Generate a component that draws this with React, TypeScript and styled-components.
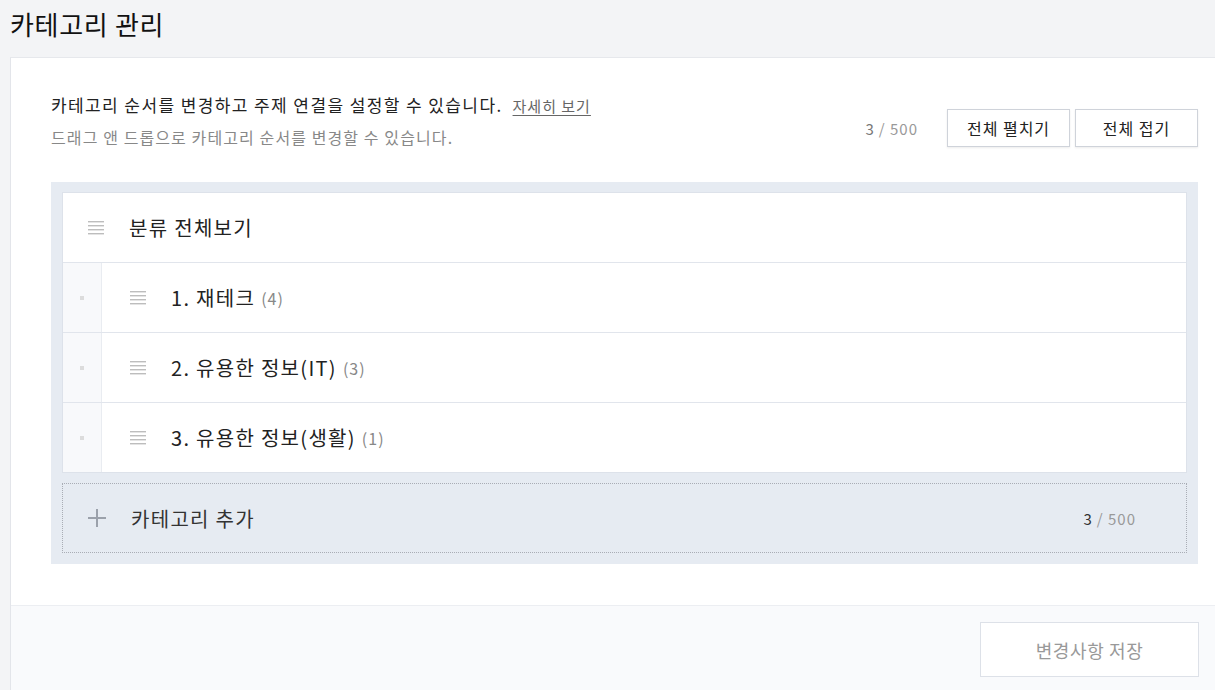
import { createGlobalStyle, styled } from "styled-components";

const GlobalStyle = createGlobalStyle`
  html, body {
    margin: 0;
    padding: 0;
    background: #f3f4f6;
    font-family: "Noto Sans CJK KR", "Noto Sans", sans-serif;
    color: #222;
  }
  * { box-sizing: border-box; }
`;

const Page = styled.div`
  width: 1215px;
  height: 690px;
  overflow: hidden;
  padding-left: 10px;
`;

const Title = styled.h1`
  margin: 0;
  height: 57px;
  display: flex;
  align-items: center;
  padding-bottom: 10px;
  font-size: 26px;
  letter-spacing: 0.7px;
  font-weight: 400;
  color: #111;
`;

const Card = styled.div`
  background: #fff;
  border-top: 1px solid #e6e8ec;
  border-left: 1px solid #e3e5ea;
  width: 1215px;
`;

const Body = styled.div`
  padding: 35px 0 41px 40px;
  width: 1187px;
`;

const Header = styled.div`
  display: flex;
  align-items: flex-start;
  justify-content: space-between;
  height: 89px;
`;

const Desc = styled.div`
  display: flex;
  flex-direction: column;
  gap: 8px;
`;

const DescMain = styled.p`
  margin: 0;
  font-size: 17px;
  letter-spacing: 1.4px;
  line-height: 24px;
  color: #222;
`;

const HelpLink = styled.a`
  margin-left: 10px;
  font-size: 15px;
  letter-spacing: 1px;
  color: #666;
  text-decoration: underline;
  text-underline-offset: 3px;
`;

const DescSub = styled.p`
  margin: 0;
  font-size: 16px;
  letter-spacing: 1.1px;
  line-height: 22px;
  color: #888;
`;

const Actions = styled.div`
  display: flex;
  align-items: center;
  gap: 5px;
  margin-top: 16px;
`;

const Counter = styled.span<{ $strong?: boolean }>`
  font-size: 15px;
  letter-spacing: 1px;
  color: #999;
  margin-right: 24px;
  b {
    font-weight: 400;
    color: ${(p) => (p.$strong ? "#333" : "#777")};
    margin-right: 4px;
  }
`;

const Button = styled.button`
  height: 38px;
  padding: 0;
  width: 123px;
  background: #fff;
  border: 1px solid #cfd3da;
  box-shadow: 0 1px 2px rgba(0, 0, 0, 0.08);
  font-family: inherit;
  font-size: 16px;
  letter-spacing: 1px;
  color: #222;
`;

const ListBox = styled.div`
  background: #e6ebf2;
  padding: 10px 11px 11px;
  display: flex;
  flex-direction: column;
  gap: 10px;
`;

const Rows = styled.div`
  background: #fff;
  border: 1px solid #dde2ea;
`;

const Row = styled.div<{ $child?: boolean }>`
  height: ${(p) => (p.$child ? 70 : 69)}px;
  display: flex;
  align-items: stretch;
  border-top: ${(p) => (p.$child ? "1px solid #e1e5ec" : "none")};
`;

const Gutter = styled.div`
  width: 39px;
  background: #f8f9fb;
  border-right: 1px solid #e9ecf1;
  display: flex;
  align-items: center;
  justify-content: center;
  &::after {
    content: "";
    width: 4px;
    height: 4px;
    background: #dcdcdc;
  }
`;

const RowInner = styled.div<{ $indent: number }>`
  flex: 1;
  display: flex;
  align-items: center;
  padding-left: ${(p) => p.$indent}px;
`;

const Grip = styled.span`
  display: flex;
  flex-direction: column;
  gap: 3px;
  width: 16px;
  margin-right: 25px;
  span {
    height: 1px;
    background: #bdbdbd;
    box-shadow: 0 1px 0 #e4e4e4;
  }
`;

const Name = styled.span`
  font-size: 20px;
  letter-spacing: 1.3px;
  color: #222;
`;

const Count = styled.span`
  margin-left: 6px;
  font-size: 16px;
  letter-spacing: 1px;
  color: #888;
`;

const AddRow = styled.div`
  height: 70px;
  border: 1px dotted #a9adb5;
  display: flex;
  align-items: center;
  padding: 0 50px 0 25px;
`;

const Plus = styled.span`
  position: relative;
  width: 18px;
  height: 18px;
  margin-right: 25px;
  &::before,
  &::after {
    content: "";
    position: absolute;
    background: #9ba1ab;
  }
  &::before {
    left: 0;
    right: 0;
    top: 8px;
    height: 2px;
  }
  &::after {
    top: 0;
    bottom: 0;
    left: 8px;
    width: 2px;
  }
`;

const AddLabel = styled.span`
  flex: 1;
  font-size: 20px;
  letter-spacing: 1.3px;
  color: #333;
`;

const Footer = styled.div`
  border-top: 1px solid #eceef2;
  background: #f9fafc;
  height: 86px;
  width: 1205px;
  display: flex;
  justify-content: flex-end;
  padding: 16px 17px 0 0;
`;

const SaveButton = styled.button`
  width: 219px;
  height: 55px;
  background: #fff;
  border: 1px solid #dde1e8;
  font-family: inherit;
  font-size: 18px;
  letter-spacing: 0.6px;
  color: #999;
`;

const categories = [
  { name: "1. 재테크", count: 4 },
  { name: "2. 유용한 정보(IT)", count: 3 },
  { name: "3. 유용한 정보(생활)", count: 1 },
];

const GripIcon = () => (
  <Grip>
    <span />
    <span />
    <span />
    <span />
  </Grip>
);

export default function App() {
  return (
    <>
      <GlobalStyle />
      <Page>
        <Title>카테고리 관리</Title>
        <Card>
          <Body>
            <Header>
              <Desc>
                <DescMain>
                  카테고리 순서를 변경하고 주제 연결을 설정할 수 있습니다.
                  <HelpLink>자세히 보기</HelpLink>
                </DescMain>
                <DescSub>드래그 앤 드롭으로 카테고리 순서를 변경할 수 있습니다.</DescSub>
              </Desc>
              <Actions>
                <Counter>
                  <b>3</b>/ 500
                </Counter>
                <Button>전체 펼치기</Button>
                <Button>전체 접기</Button>
              </Actions>
            </Header>
            <ListBox>
              <Rows>
                <Row>
                  <RowInner $indent={25}>
                    <GripIcon />
                    <Name>분류 전체보기</Name>
                  </RowInner>
                </Row>
                {categories.map((c) => (
                  <Row $child key={c.name}>
                    <Gutter />
                    <RowInner $indent={28}>
                      <GripIcon />
                      <Name>{c.name}</Name>
                      <Count>({c.count})</Count>
                    </RowInner>
                  </Row>
                ))}
              </Rows>
              <AddRow>
                <Plus />
                <AddLabel>카테고리 추가</AddLabel>
                <Counter $strong style={{ marginRight: 0 }}>
                  <b>3</b>/ 500
                </Counter>
              </AddRow>
            </ListBox>
          </Body>
          <Footer>
            <SaveButton>변경사항 저장</SaveButton>
          </Footer>
        </Card>
      </Page>
    </>
  );
}
